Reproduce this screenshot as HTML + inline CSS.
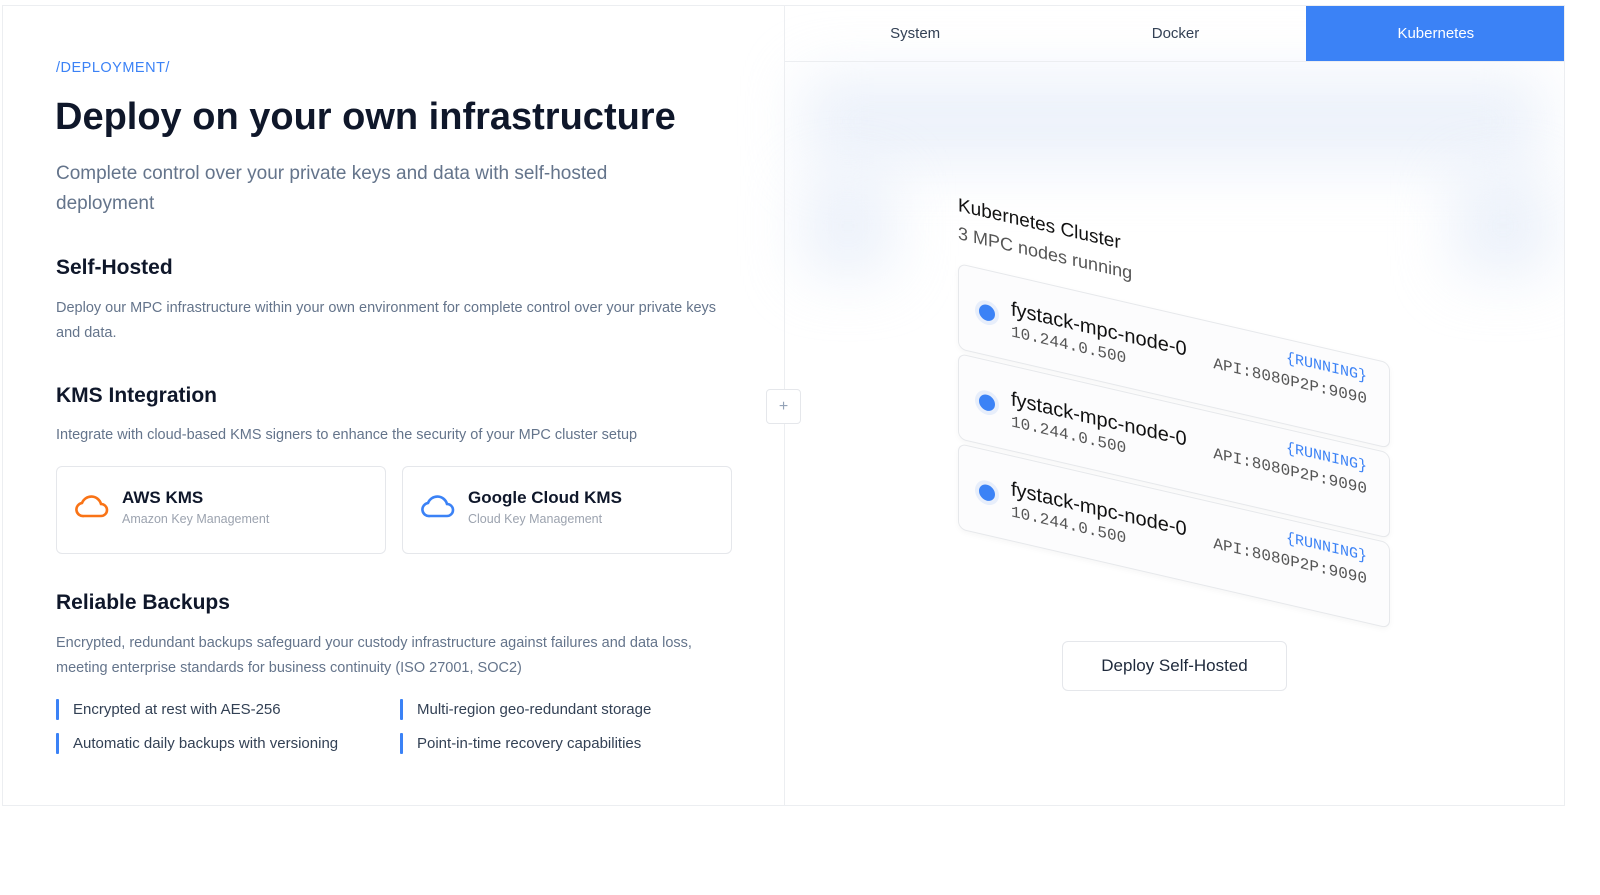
<!DOCTYPE html>
<html><head><meta charset="utf-8"><style>
*{box-sizing:border-box;margin:0;padding:0}
body{width:1600px;height:895px;background:#fff;font-family:"Liberation Sans",sans-serif;position:relative;overflow:hidden;color:#0f172a}
.frame{position:absolute;left:2px;top:5px;width:1563px;height:801px;border:1px solid #eceef1;overflow:hidden}
.div{position:absolute;left:781px;top:0;width:1px;height:800px;background:#eceef1}
.abs{position:absolute;white-space:nowrap}
.tabs{position:absolute;left:782px;top:0;width:781px;height:56px;border-bottom:1px solid #eceef1;display:flex}
.tab{flex:1;display:flex;align-items:center;justify-content:center;font-size:15px;color:#334155}
.tab.on{background:#3b82f6;color:#fff}
.kms{position:absolute;top:460px;width:330px;height:88px;border:1px solid #e5e7eb;border-radius:6px}
.kms b{position:absolute;left:65px;top:21px;font-size:17px;font-weight:600;color:#0f172a}
.kms span{position:absolute;left:65px;top:45px;font-size:12.5px;color:#9ca3af}
.kms svg{position:absolute;left:18px;top:26px}
.bul{position:absolute;font-size:15px;color:#334155;padding-left:17px}
.bul:before{content:"";position:absolute;left:0;top:-2px;width:3px;height:21px;background:#3b82f6;border-radius:1px}
.blur{position:absolute;background:#dfe8f7;filter:blur(30px);opacity:.6}
.sk{position:absolute;left:958px;top:195px;transform-origin:0 0;transform:skewY(13deg)}
.card{position:absolute;left:0;width:432px;height:86px;border:1px solid #e6e8eb;border-radius:8px;background:#fcfcfd;box-shadow:0 2px 6px rgba(0,0,0,.04)}
.dot{position:absolute;left:20px;top:34px;width:16px;height:16px;border-radius:50%;background:#3b82f6;box-shadow:0 0 0 4px #e7eefb}
.nm{position:absolute;left:52px;top:22px;font-size:20px;color:#111}
.ip{position:absolute;left:52px;top:47px;font-family:"Liberation Mono",monospace;font-size:16px;color:#555}
.rn{position:absolute;right:22px;top:10px;font-family:"Liberation Mono",monospace;font-size:15px;color:#3b82f6}
.api{position:absolute;right:22px;top:32px;font-family:"Liberation Mono",monospace;font-size:16px;color:#555}
</style></head><body>
<div class="frame">
<div class="blur" style="left:800px;top:70px;width:740px;height:90px"></div>
<div class="blur" style="left:800px;top:170px;width:90px;height:100px"></div>
<div class="blur" style="left:1450px;top:170px;width:100px;height:100px"></div>
<div class="div"></div>
<div class="tabs"><div class="tab">System</div><div class="tab">Docker</div><div class="tab on">Kubernetes</div></div>
<div class="abs" style="left:53px;top:54px;font-size:14.5px;color:#3b82f6;letter-spacing:.5px">/DEPLOYMENT/</div>
<div class="abs" style="left:52px;top:90px;font-size:38px;font-weight:700;color:#0f172a">Deploy on your own infrastructure</div>
<div class="abs" style="left:53px;top:153px;font-size:19px;line-height:30px;color:#64748b;white-space:normal;width:600px">Complete control over your private keys and data with self-hosted deployment</div>
<div class="abs" style="left:53px;top:250px;font-size:21px;font-weight:700">Self-Hosted</div>
<div class="abs" style="left:53px;top:290px;font-size:14.5px;line-height:25px;color:#64748b;white-space:normal;width:680px">Deploy our MPC infrastructure within your own environment for complete control over your private keys and data.</div>
<div class="abs" style="left:53px;top:378px;font-size:21px;font-weight:700">KMS Integration</div>
<div class="abs" style="left:53px;top:421px;font-size:14.5px;color:#64748b">Integrate with cloud-based KMS signers to enhance the security of your MPC cluster setup</div>
<div class="kms" style="left:53px"><svg width="34" height="26" viewBox="0 0 34 26"><path d="M9 23h17a6 6 0 0 0 0-12 10 10 0 0 0-19-1 6.5 6.5 0 0 0 2 13z" fill="none" stroke="#f97316" stroke-width="2.6"/></svg><b>AWS KMS</b><span>Amazon Key Management</span></div>
<div class="kms" style="left:399px"><svg width="34" height="26" viewBox="0 0 34 26"><path d="M9 23h17a6 6 0 0 0 0-12 10 10 0 0 0-19-1 6.5 6.5 0 0 0 2 13z" fill="none" stroke="#3b82f6" stroke-width="2.6"/></svg><b>Google Cloud KMS</b><span>Cloud Key Management</span></div>
<div class="abs" style="left:53px;top:585px;font-size:21px;font-weight:700">Reliable Backups</div>
<div class="abs" style="left:53px;top:625px;font-size:14.5px;line-height:25px;color:#64748b;white-space:normal;width:680px">Encrypted, redundant backups safeguard your custody infrastructure against failures and data loss, meeting enterprise standards for business continuity (ISO 27001, SOC2)</div>
<div class="bul" style="left:53px;top:695px">Encrypted at rest with AES-256</div>
<div class="bul" style="left:397px;top:695px">Multi-region geo-redundant storage</div>
<div class="bul" style="left:53px;top:729px">Automatic daily backups with versioning</div>
<div class="bul" style="left:397px;top:729px">Point-in-time recovery capabilities</div>
<div class="abs" style="left:763px;top:383px;width:35px;height:35px;border:1px solid #e5e7eb;border-radius:4px;background:#fff;text-align:center;line-height:33px;color:#94a3b8;font-size:16px">+</div>
<div class="abs" style="left:1059px;top:635px;width:225px;height:50px;border:1px solid #e5e7eb;border-radius:6px;background:#fff;text-align:center;line-height:48px;font-size:17px;color:#1e293b">Deploy Self-Hosted</div>
</div>
<div class="sk">
<div class="abs" style="left:0;top:0;font-size:19px;color:#111">Kubernetes Cluster</div>
<div class="abs" style="left:0;top:28px;font-size:18px;color:#555">3 MPC nodes running</div>
<div class="card" style="top:68px"><div class="dot"></div><div class="nm">fystack-mpc-node-0</div><div class="ip">10.244.0.500</div><div class="rn">{RUNNING}</div><div class="api">API:8080P2P:9090</div></div>
<div class="card" style="top:158px"><div class="dot"></div><div class="nm">fystack-mpc-node-0</div><div class="ip">10.244.0.500</div><div class="rn">{RUNNING}</div><div class="api">API:8080P2P:9090</div></div>
<div class="card" style="top:248px"><div class="dot"></div><div class="nm">fystack-mpc-node-0</div><div class="ip">10.244.0.500</div><div class="rn">{RUNNING}</div><div class="api">API:8080P2P:9090</div></div>
</div>
</body></html>
